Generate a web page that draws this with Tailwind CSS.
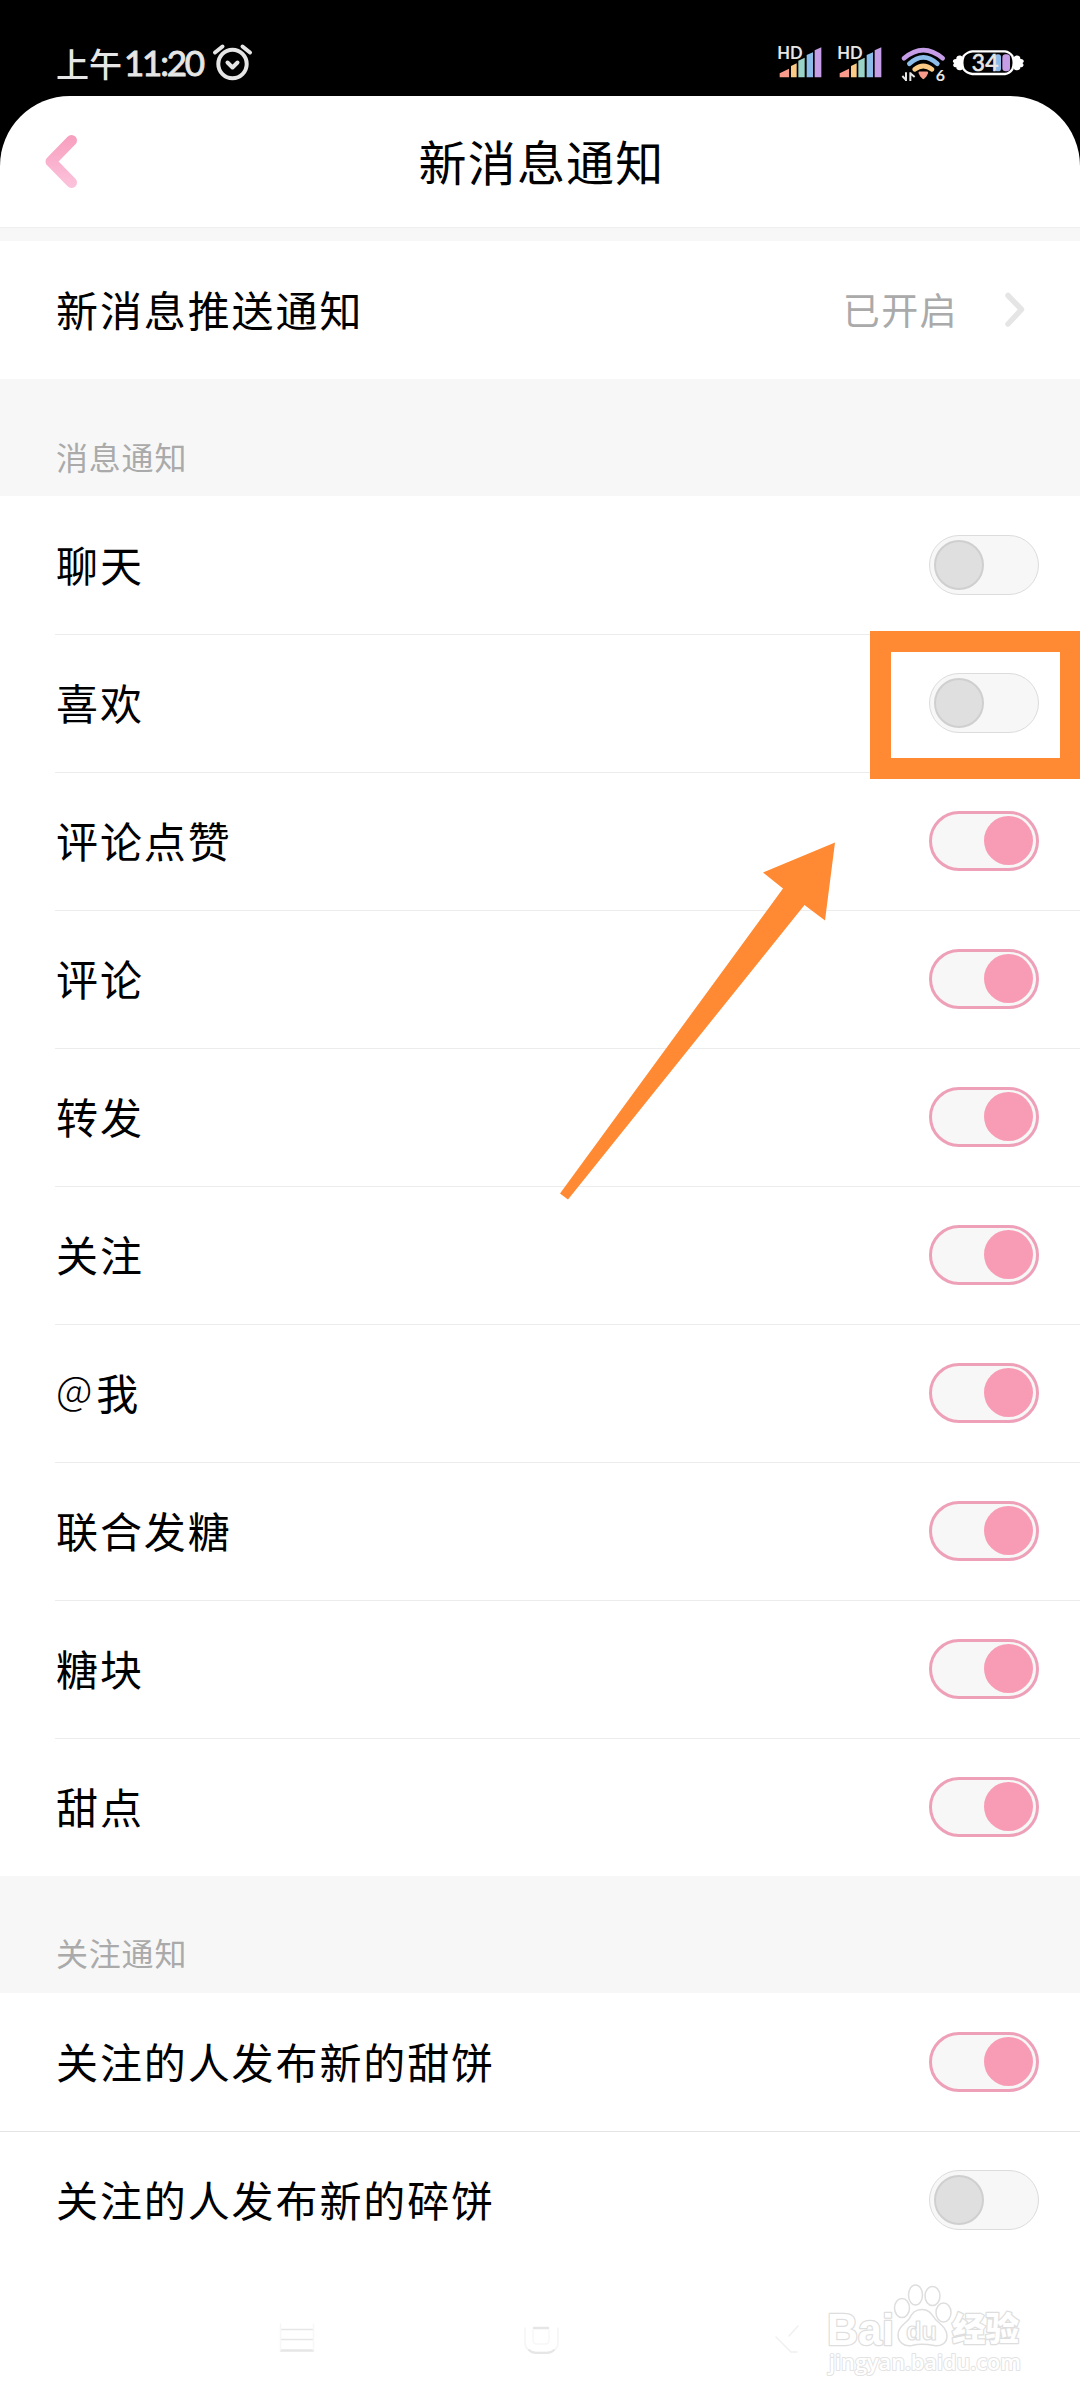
<!DOCTYPE html>
<html lang="zh-CN">
<head>
<meta charset="utf-8">
<title>新消息通知</title>
<script src="https://cdn.jsdelivr.net/npm/@tailwindcss/browser@4"></script>
</head>
<body class="bg-black">
<div class="relative flex h-[2400px] w-[1080px] flex-col overflow-hidden bg-black font-['Noto_Sans_CJK_SC',sans-serif] text-black">

  <!-- Status bar -->
  <header class="flex h-24 shrink-0 items-start justify-between pl-14 pr-[54px] text-[#e6e6e6]">
    <div class="flex items-start">
      <svg class="mt-10 h-12 w-[150px]" viewBox="0 0 150 48" fill="#e6e6e6">
        <text x="0" y="36.500" font-size="33" font-weight="500" textLength="66">上午</text>
        <text x="68" y="36" font-size="35" font-weight="400" stroke="#e6e6e6" stroke-width="0.900" font-family="Lato" textLength="81">11:20</text>
      </svg>
      <svg class="ml-[6px] mt-[43px] h-10 w-[42px]" viewBox="0 0 42 40" fill="none" stroke="#e6e6e6" stroke-width="4" stroke-linecap="round" stroke-linejoin="round">
        <circle cx="20.500" cy="21" r="14.200"/>
        <path d="M15.500 19.500l5 5 5-5M3 9.500l7.500-6M38 9.500l-7.500-6"/>
      </svg>
    </div>
    <div class="flex items-start">
      <svg class="mt-[45px] h-[34px] w-[60px] overflow-visible" viewBox="54 75 180 102">
        <g transform="translate(-5 0)">
        <path fill="#f99a8b" d="M58 160L86 146V172H58Z"/><path fill="#fbcb85" d="M92 138L109 130V172H92Z"/><path fill="#9ad3c8" d="M114 122L133 113V172H114Z"/><path fill="#8cbdea" d="M139 105L158 97V172H139Z"/><path fill="#c69ee8" d="M163 91L183 82V172H163Z"/>
        <text x="51" y="118" font-family="Lato" font-weight="700" font-size="50" textLength="76" lengthAdjust="spacingAndGlyphs" fill="#e6e6e6" stroke="#000" stroke-width="5" paint-order="stroke">HD</text>
        </g>
      </svg>
      <svg class="mt-[45px] h-[34px] w-[60px] overflow-visible" viewBox="54 75 180 102">
        <g transform="translate(-5 0)">
        <path fill="#f99a8b" d="M58 160L86 146V172H58Z"/><path fill="#fbcb85" d="M92 138L109 130V172H92Z"/><path fill="#9ad3c8" d="M114 122L133 113V172H114Z"/><path fill="#8cbdea" d="M139 105L158 97V172H139Z"/><path fill="#c69ee8" d="M163 91L183 82V172H163Z"/>
        <text x="51" y="118" font-family="Lato" font-weight="700" font-size="50" textLength="76" lengthAdjust="spacingAndGlyphs" fill="#e6e6e6" stroke="#000" stroke-width="5" paint-order="stroke">HD</text>
        </g>
      </svg>
      <svg class="mt-[45px] h-[38px] w-[50px] overflow-visible" viewBox="414 75 150 114" fill="none" stroke-width="14" stroke-linecap="round">
        <g transform="translate(-5 0)">
        <path stroke="#c69ee8" d="M431 115Q489 66 547 115"/>
        <path stroke="#8cbdea" d="M447 131Q489 93 531 131"/>
        <path stroke="#fbcb85" d="M463 148Q489 128 515 148"/>
        <path fill="#f99a8b" stroke="#f99a8b" stroke-width="7" stroke-linejoin="round" d="M478 158H500L495 168L489 174L483 168Z"/>
        <path stroke="#e6e6e6" stroke-width="6" stroke-linecap="butt" d="M437 157V183M450 183V157M438 181L426 168M449 159L463 171"/>
        <text x="526" y="183" fill="#e6e6e6" font-family="Lato" font-weight="700" font-size="48">6</text>
        </g>
      </svg>
      <svg class="ml-px mt-[45px] h-[34px] w-[75px]" viewBox="576 75 225 102">
        <path fill="#fff" d="M612 112C604 102 590 108 592 117C580 116 579 127 586 129C579 133 583 144 592 141C590 151 605 155 612 146ZM764 112C772 102 786 108 784 117C796 116 797 127 790 129C797 133 793 144 784 141C786 151 771 155 764 146Z"/>
        <path fill="#000" stroke="#fff" stroke-width="7" d="M640 94H738Q752 96 760 108Q768 128 760 148Q752 160 738 162H640Q624 160 614 148Q606 128 614 108Q624 96 640 94Z"/>
        <rect x="708" y="103" width="18" height="51" rx="8" fill="#8cbdea"/>
        <rect x="730" y="103" width="23" height="51" rx="10" fill="#c69ee8"/>
        <text x="638" y="152" fill="#e6e6e6" stroke="#e6e6e6" stroke-width="2" font-family="Lato" font-weight="400" font-size="68" textLength="80">34</text>
      </svg>
    </div>
  </header>

  <main class="flex grow flex-col overflow-hidden rounded-t-[70px] bg-white">
    <!-- Title bar -->
    <div class="grid h-[131px] shrink-0 grid-cols-[120px_1fr_120px] items-center">
      <svg class="ml-10 h-16 w-11" viewBox="0 0 44 64" fill="none">
        <defs><linearGradient id="back" x1="0" y1="6" x2="0" y2="58" gradientUnits="userSpaceOnUse"><stop stop-color="#f79fbe"/><stop offset="1" stop-color="#fcc3dc"/></linearGradient></defs>
        <path d="M31.500 10.500L11 31.500L31.500 52.500" stroke="url(#back)" stroke-width="11" stroke-linecap="round" stroke-linejoin="round"/>
      </svg>
      <h1 class="pb-[3px] pl-[3px] text-center text-[48px] leading-none tracking-[1.200px]">新消息通知</h1>
    </div>
    <div class="h-[14px] shrink-0 border-t border-[#efefef] bg-[#f7f7f7]"></div>

    <div class="flex h-[138px] shrink-0 items-center pl-14 pr-[54px]">
      <span class="grow pb-[3px] text-[42px] leading-none tracking-[1.900px]">新消息推送通知</span>
      <span class="pb-[2px] text-[37px] leading-none tracking-[1.400px] text-[#aaa]">已开启</span>
      <svg class="ml-[44px] h-10 w-[24px]" viewBox="0 0 24 40" fill="none" stroke="#e5e5e5" stroke-width="5.500" stroke-linecap="round" stroke-linejoin="round"><path d="M6 5.500L19.500 19.500L6 34"/></svg>
    </div>

    <h2 class="flex h-[117px] shrink-0 items-end bg-[#f7f7f7] pb-6 pl-14 text-[32px] leading-none tracking-[0.800px] text-[#aaa]">消息通知</h2>
    <ul id="messages" class="shrink-0"></ul>

    <h2 class="flex h-[117px] shrink-0 items-end bg-[#f7f7f7] pb-[25px] pl-14 text-[32px] leading-none tracking-[0.800px] text-[#aaa]">关注通知</h2>
    <ul id="follows" class="shrink-0"></ul>
  </main>

  <!-- Highlight frame and pointer over the list -->
  <div class="absolute -right-px top-[631px] h-[148px] w-[211px] border-[21px] border-[#ff8a33]"></div>
  <svg class="absolute left-[560px] top-[842px] h-[358px] w-[276px]" viewBox="560 842 276 358"><path fill="#ff8a33" d="M835 842.500L763 872.500L783 888.500L560 1193.500L568 1199.500L804.500 905L825 920.500Z"/></svg>

  <!-- System navigation keys -->
  <svg class="absolute left-[270px] top-[2310px] h-[54px] w-[540px]" viewBox="270 2310 540 54" fill="none">
    <g stroke="#e6e6e6" stroke-width="1.500" stroke-linecap="round">
      <path d="M281 2329.500H313M281 2339.500H313"/><path stroke-width="2.500" d="M281 2350.500H313"/>
      <path stroke="#f7f7f7" d="M280.500 2324V2350M313.500 2324V2350"/>
      <path stroke="#f5f5f5" d="M525 2328V2342Q525 2352 536 2352H547Q558 2352 558 2342V2328"/>
      <path stroke-width="2" d="M529 2350Q532 2353 536 2353H547Q551 2353 554 2350"/><path stroke-width="2.500" d="M534 2328H548"/>
      <path stroke="#f7f7f7" d="M533 2330V2340Q533 2344 537 2344H545Q549 2344 549 2340V2330"/>
      <path stroke="#f0f0f0" d="M776 2337L791 2352H797M789 2336L798 2326"/>
    </g>
  </svg>

  <!-- Watermark -->
  <svg class="absolute left-[820px] top-[2278px] h-[104px] w-[210px]" viewBox="820 2278 210 104" fill="#fff" stroke="#dedede" stroke-width="1.500" stroke-linejoin="round">
    <text x="827" y="2344.500" font-family="Liberation Sans" font-weight="700" font-size="44" textLength="67" lengthAdjust="spacingAndGlyphs" stroke-width="2.500" paint-order="stroke">Bai</text>
    <ellipse cx="902" cy="2308" rx="7.500" ry="9.500"/><ellipse cx="915.500" cy="2295" rx="7" ry="10"/><ellipse cx="932.500" cy="2296" rx="7.500" ry="9.500"/><ellipse cx="943.500" cy="2312.500" rx="7.500" ry="9.500"/>
    <path d="M922 2309.500C930 2309.500 932 2315 936 2320C940 2324 947 2328 947 2336C947 2344 940 2346.500 934 2345.500C926 2344 918 2344 912 2345.500C904 2347 898 2342 898 2335C898 2327 905 2324 909 2319C912 2314 914 2309.500 922 2309.500Z"/>
    <text x="906" y="2340" font-family="Liberation Sans" font-size="26" font-weight="700" textLength="31" lengthAdjust="spacingAndGlyphs" stroke-width="1.200">du</text>
    <text x="952" y="2341" font-size="33" font-weight="900" textLength="67" lengthAdjust="spacingAndGlyphs" stroke-width="2.500" paint-order="stroke">经验</text>
    <text x="829" y="2370" font-family="Open Sans" font-weight="600" font-size="22" textLength="192" lengthAdjust="spacingAndGlyphs" stroke="#e3e3e3" stroke-width="2" paint-order="stroke">jingyan.baidu.com</text>
  </svg>
</div>

<script>
  const toggle = on => on
    ? '<span class="mb-[2px] flex h-[60px] w-[110px] items-center justify-end rounded-full border-[3px] border-[#eea0b8] bg-[#f7f7f7] pr-[3px]"><i class="size-[49px] rounded-full bg-[#f89cb5]"></i></span>'
    : '<span class="mb-[2px] flex h-[60px] w-[110px] items-center rounded-full border border-[#dcdcdc] bg-[#f7f7f7] pl-1"><i class="size-[50px] rounded-full border-2 border-[#cfcfcf] bg-[#dfdfdf]"></i></span>';
  const label = text => `<span class="flex pb-1 text-[42px] leading-none tracking-[1.900px]">${text.replace('@', '<span class="-mt-[3px] mr-[2px] text-[40px] font-light">@</span>')}</span>`;
  const messages = [['聊天',0],['喜欢',0],['评论点赞',1],['评论',1],['转发',1],['关注',1],['@我',1],['联合发糖',1],['糖块',1],['甜点',1]];
  const follows = [['关注的人发布新的甜饼',1],['关注的人发布新的碎饼',0]];
  document.getElementById('messages').innerHTML = messages.map(([t, on], i) =>
    `<li class="ml-[55px] flex h-[138px] items-center justify-between border-t pl-px pr-[41px] ${i ? 'border-[#ececec]' : 'border-white'}">${label(t)}${toggle(on)}</li>`).join('');
  document.getElementById('follows').innerHTML = follows.map(([t, on], i) =>
    `<li class="flex h-[138px] items-center justify-between border-t pl-14 pr-[41px] ${i ? 'border-[#e4e4e4]' : 'border-white'}">${label(t)}${toggle(on)}</li>`).join('');
</script>
</body>
</html>
